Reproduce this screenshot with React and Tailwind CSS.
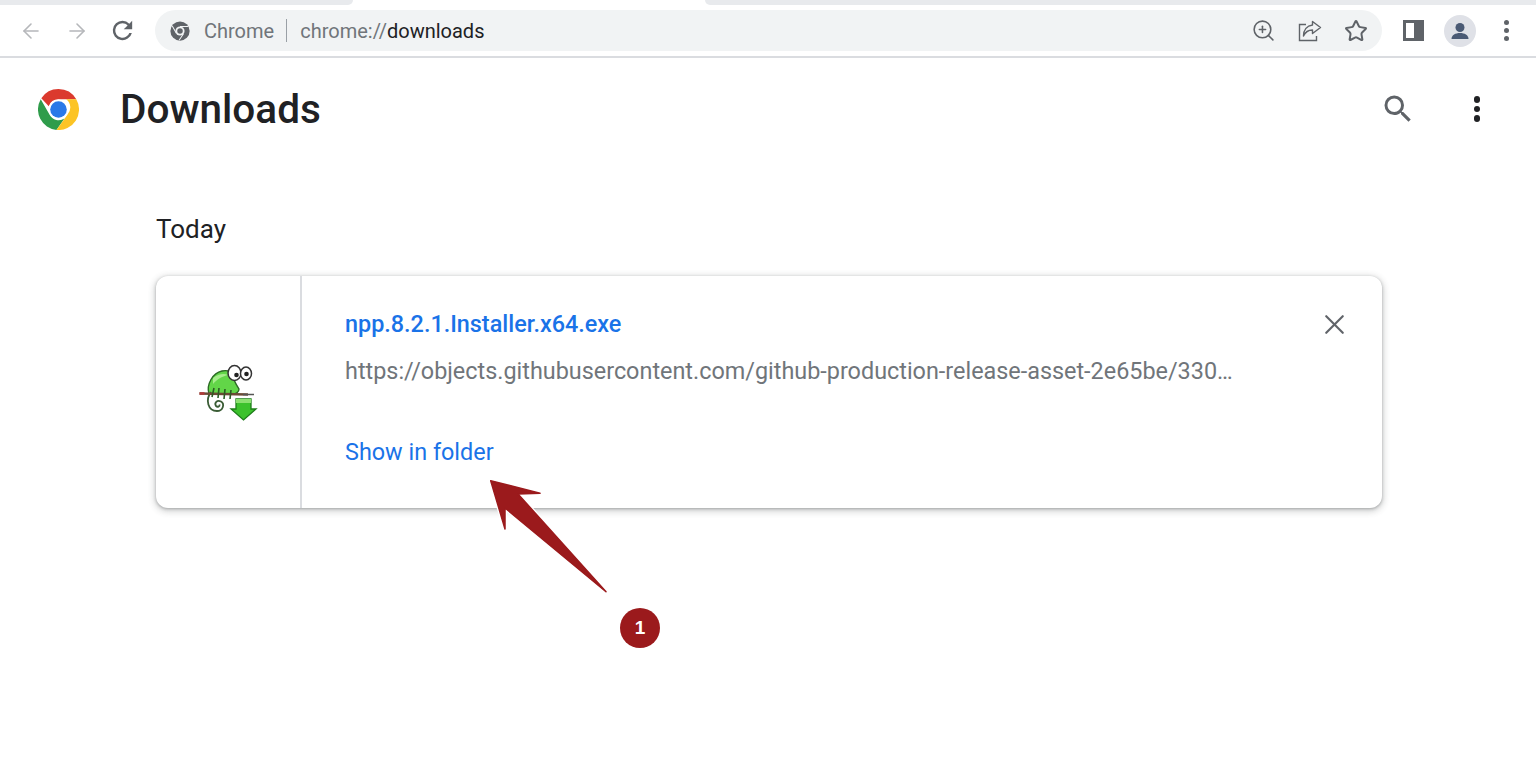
import { ArrowLeft, ArrowRight, ZoomIn, Star, X } from "lucide-react";

function ChromeLogo() {
  return (
    <svg viewBox="0 0 48 48" className="h-[41px] w-[41px]">
      <circle cx="24" cy="24" r="24" fill="#fff" />
      <path d="M24 0a24 24 0 0 1 20.8 12H24a12 12 0 0 0-11.4 8.2L3.9 10.8A24 24 0 0 1 24 0z" fill="#db3a2e" />
      <path d="M3.2 12A24 24 0 0 0 21.6 47.9L31 34.5a12 12 0 0 1-17.4-4.5z" fill="#2f9c4b" />
      <path d="M44.8 12A24 24 0 0 1 21.6 47.9L34.4 30a12 12 0 0 0-1.4-18z" fill="#fcc425" />
      <circle cx="24" cy="24" r="11.700" fill="#fff" />
      <circle cx="24" cy="24" r="9.700" fill="#2a78e8" />
    </svg>
  );
}

function SmallChromeIcon() {
  return (
    <svg viewBox="0 0 24 24" className="h-[22px] w-[22px]">
      <circle cx="12" cy="12" r="10.5" fill="#5f6368" />
      <circle cx="12" cy="12" r="5" fill="#f1f3f4" />
      <circle cx="12" cy="12" r="3" fill="#5f6368" />
      <path d="M12 7h9M8 14.5 3.6 6.5M15.8 15 11 22" stroke="#f1f3f4" strokeWidth="1.1" fill="none" />
    </svg>
  );
}

function ShareIcon() {
  return (
    <svg viewBox="0 0 24 24" className="h-[24px] w-[24px]" fill="none" stroke="#5f6368" strokeWidth="1.4">
      <path d="M8 5.500H1.500V21.500H18.500V17" />
      <path d="M14.500 2.500 22.500 8.500 14.500 14.500V11C10.500 11 7.500 12.500 5.500 17 5.500 11 9 6.800 14.500 6z" strokeLinejoin="round" />
    </svg>
  );
}

function ReloadIcon() {
  return (
    <svg viewBox="0 0 24 24" className="h-[29px] w-[29px]" fill="#5f6368">
      <path d="M17.650 6.350A7.960 7.960 0 0 0 12 4a8 8 0 1 0 7.730 10h-2.080A6 6 0 1 1 12 6c1.660 0 3.140.690 4.220 1.780L13 11h7V4z" />
    </svg>
  );
}

function SearchIcon() {
  return (
    <svg viewBox="0 0 24 24" className="h-[36px] w-[36px]" fill="#5f6368">
      <path d="M15.500 14h-.790l-.280-.270A6.470 6.470 0 0 0 16 9.500 6.500 6.500 0 1 0 9.500 16c1.610 0 3.090-.590 4.230-1.570l.270.280v.790l5 4.990L20.490 19l-4.990-5zm-6 0C7.010 14 5 11.990 5 9.500S7.010 5 9.500 5 14 7.010 14 9.500 11.990 14 9.500 14z" />
    </svg>
  );
}

function NotepadIcon() {
  return (
    <svg viewBox="0 0 60 60" className="h-[60px] w-[60px] blur-[0.3px]">
      <path d="M37 37H52V47H57L44.500 58 32 47H37z" fill="#3cc22c" stroke="#1e7d1a" strokeWidth="1.300" />
      <path d="M37 37H52V41H37z" fill="#8ce070" />
      <path d="M10 32C7 22 14 11 23 9 28 8 32 9 34 13 34 18 37 22 40 27 40 30 37 32 34 32z" fill="#62d648" stroke="#2c6b24" strokeWidth="1.400" />
      <path d="M14 16C19 12 25 11 29 13 24 14 18 17 14 22z" fill="#a6ec8c" />
      <path d="M12 30C6 38 9 49 18 49 24 49 26 42 22 39.500 18 37.500 15 41 17 44 18.500 45.500 21 44.500 20.500 42.500" fill="none" stroke="#3a5c35" strokeWidth="1.800" />
      <ellipse cx="35.500" cy="11" rx="6.500" ry="7.500" fill="#fff" stroke="#333" strokeWidth="1.500" />
      <ellipse cx="47" cy="11.500" rx="5.500" ry="6.500" fill="#fff" stroke="#333" strokeWidth="1.500" />
      <circle cx="37.500" cy="13" r="2.300" fill="#222" />
      <circle cx="47.500" cy="12" r="2.300" fill="#222" />
      <path d="M0.500 31.500 49 32.500" stroke="#6b4a35" strokeWidth="2.600" />
      <path d="M0.500 31.500h5" stroke="#b03a3a" strokeWidth="2.600" />
      <path d="M44 32.500h11" stroke="#555" strokeWidth="1.500" />
      <path d="M15 26 13 35M20 26l-1 10M26 27l-1 10M32 28l-1 9" stroke="#2c5b24" strokeWidth="1.600" />
    </svg>
  );
}

function Annotation() {
  return (
    <svg viewBox="0 0 200 190" className="absolute left-[470px] top-[465px] h-[190px] w-[200px]">
      <path
        d="M20.700 15.700 70 28.300 48 29 136 126.700 35 43 35 64z"
        fill="#9b1a1c"
        stroke="#fff"
        strokeWidth="4"
        strokeLinejoin="round"
        paintOrder="stroke"
      />
      <path d="M20.700 15.700 70 28.300 48 29 136 126.700 35 43 35 64z" fill="#9b1a1c" stroke="#9b1a1c" strokeWidth="1.500" strokeLinejoin="round" />
    </svg>
  );
}

export default function App() {
  return (
    <div className="relative h-[760px] w-full overflow-hidden bg-white font-['Roboto',sans-serif]">
      {/* tab strip */}
      <div className="flex h-[5px]">
        <div className="w-[353px] rounded-br-lg bg-[#e8eaed]" />
        <div className="w-[352px]" />
        <div className="flex-1 rounded-bl-lg bg-[#e8eaed]" />
      </div>

      {/* browser toolbar */}
      <div className="flex h-[53px] items-center border-b-2 border-[#dadce0] pr-[15px]">
        <div className="flex w-[155px] items-center pl-[19px]">
          <ArrowLeft className="h-[24px] w-[24px] text-[#b5b7ba]" strokeWidth={1.6} />
          <ArrowRight className="ml-[22px] h-[24px] w-[24px] text-[#b5b7ba]" strokeWidth={1.6} />
          <span className="ml-[19px]"><ReloadIcon /></span>
        </div>
        <div className="flex h-[41px] w-[1227px] items-center rounded-full bg-[#f1f3f4] pl-[14px] pr-[14px]">
          <SmallChromeIcon />
          <span className="ml-[13px] text-[20px] text-[#70757a]">Chrome</span>
          <span className="ml-[12px] h-[23px] w-px bg-[#9aa0a6]" />
          <span className="ml-[13px] text-[20px] text-[#70757a]">
            chrome://<span className="text-[#202124]">downloads</span>
          </span>
          <div className="ml-auto flex items-center">
            <ZoomIn className="h-[25px] w-[25px] text-[#5f6368]" strokeWidth={1.5} />
            <span className="ml-[22px]"><ShareIcon /></span>
            <Star className="ml-[22px] h-[24px] w-[24px] text-[#5f6368]" strokeWidth={2} />
          </div>
        </div>
        <div className="ml-[21px] flex h-[21px] w-[21px] border-[3px] border-[#5f6368] bg-white">
          <div className="ml-auto h-full w-[7px] bg-[#5f6368]" />
        </div>
        <div className="ml-[20px] flex h-[32px] w-[32px] items-center justify-center rounded-full bg-[#dfe1e7]">
          <svg viewBox="0 0 24 24" className="h-[24px] w-[24px]" fill="#4a5a74">
            <circle cx="12" cy="8.500" r="4.500" />
            <path d="M3.500 20c0-4 4-6 8.500-6s8.500 2 8.500 6z" />
          </svg>
        </div>
        <div className="ml-[28px] flex flex-col gap-[3.500px]">
          <span className="h-[4.500px] w-[4.500px] rounded-full bg-[#5f6368]" />
          <span className="h-[4.500px] w-[4.500px] rounded-full bg-[#5f6368]" />
          <span className="h-[4.500px] w-[4.500px] rounded-full bg-[#5f6368]" />
        </div>
      </div>

      {/* downloads header */}
      <div className="flex h-[102px] items-center pl-[38px] pr-[56px]">
        <ChromeLogo />
        <h1 className="ml-[41px] text-[40.500px] font-medium leading-none text-[#202124]">Downloads</h1>
        <span className="ml-auto"><SearchIcon /></span>
        <div className="ml-[58px] flex flex-col gap-[3px]">
          <span className="h-[6.500px] w-[6.500px] rounded-full bg-[#202124]" />
          <span className="h-[6.500px] w-[6.500px] rounded-full bg-[#202124]" />
          <span className="h-[6.500px] w-[6.500px] rounded-full bg-[#202124]" />
        </div>
      </div>

      {/* list */}
      <div className="pl-[156px] pt-[54px]">
        <h2 className="text-[26px] leading-[30px] text-[#202124]">Today</h2>
        <div className="mt-[32px] flex h-[232px] w-[1226px] rounded-[12px] bg-white shadow-[0_2px_6px_2px_rgba(60,64,67,0.2),0_1px_3px_rgba(60,64,67,0.35)]">
          <div className="flex w-[146px] items-center justify-center border-r-2 border-[#dadce0] pl-[2px]">
            <NotepadIcon />
          </div>
          <div className="flex min-w-0 flex-1 flex-col pl-[43px] pr-[31px]">
            <div className="mt-[35px] flex h-[26px] items-center justify-between">
              <span className="text-[23.400px] font-medium leading-[26px] text-[#1a73e8]">npp.8.2.1.Installer.x64.exe</span>
              <X className="h-[33px] w-[33px] text-[#5f6368]" strokeWidth={1.6} />
            </div>
            <p className="mt-[21px] text-[23.400px] leading-[26px] text-[#70757a]">
              https://objects.githubusercontent.com/github-production-release-asset-2e65be/330…
            </p>
            <span className="mt-[55px] text-[23.400px] leading-[26px] text-[#1a73e8]">Show in folder</span>
          </div>
        </div>
      </div>

      {/* tutorial callout */}
      <Annotation />
      <div className="absolute left-[620px] top-[608px] flex h-[40px] w-[40px] items-center justify-center rounded-full bg-[#9b1a1c] font-['Liberation_Sans',sans-serif] text-[19px] font-bold text-white">
        1
      </div>
    </div>
  );
}
